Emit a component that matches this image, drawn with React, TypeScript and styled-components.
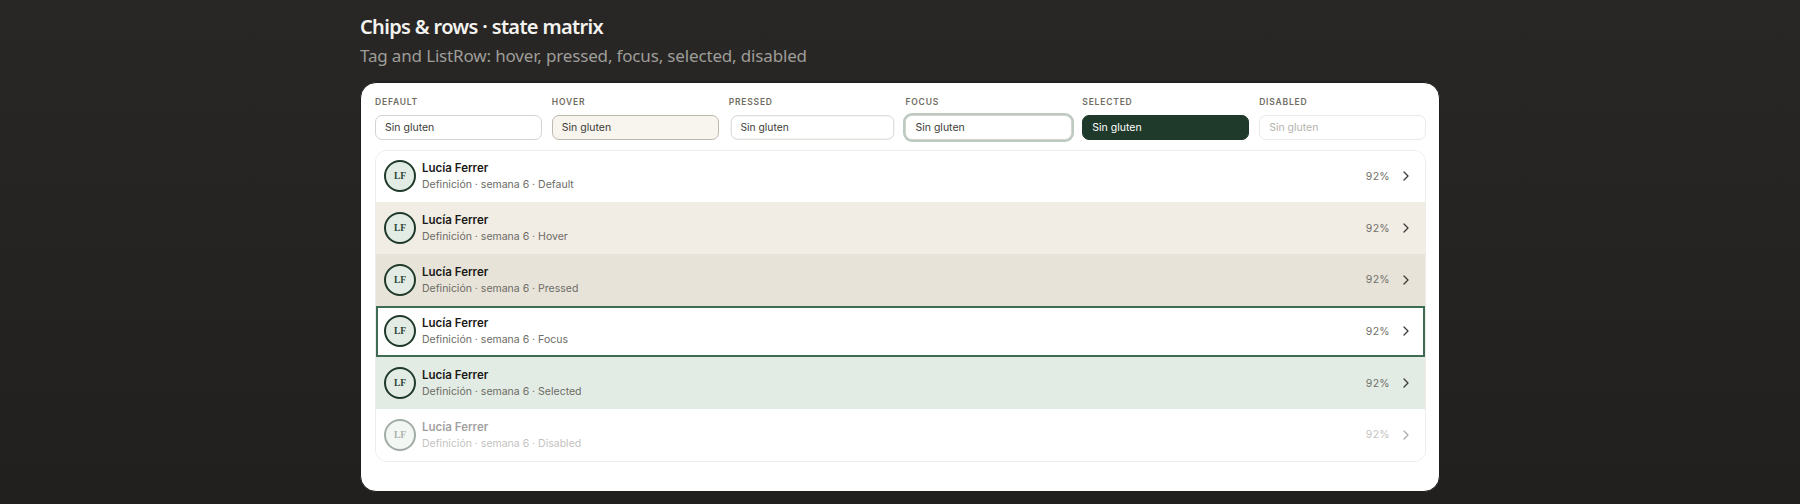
import styled, { createGlobalStyle, css } from 'styled-components'

type ChipState = 'default' | 'hover' | 'pressed' | 'focus' | 'selected' | 'disabled'

const CHIP_STATES: { state: ChipState, label: string }[] = [
  { state: 'default', label: 'Default' },
  { state: 'hover', label: 'Hover' },
  { state: 'pressed', label: 'Pressed' },
  { state: 'focus', label: 'Focus' },
  { state: 'selected', label: 'Selected' },
  { state: 'disabled', label: 'Disabled' }
]

const GlobalStyle = createGlobalStyle`
  html, body {
    background: linear-gradient(180deg, #282726, #21201e);
    height: 100%;
    margin: 0;
  }
`

const Page = styled.main`
  box-sizing: border-box;
  height: 504px;
  margin-left: 360px;
  overflow: hidden;
  padding-top: 13px;
  width: 1080px;
`

const Title = styled.h1`
  color: #f4f3ef;
  font-family: 'Noto Sans', sans-serif;
  font-size: 20px;
  font-weight: 600;
  letter-spacing: -0.65px;
  line-height: 27px;
  margin: 0;
`

const Subtitle = styled.p`
  color: #9e9d98;
  font-family: 'Noto Sans', sans-serif;
  font-size: 17px;
  letter-spacing: -0.16px;
  line-height: 24px;
  margin: 4px 0 0;
`

const Card = styled.section`
  background: #fff;
  border: 1px solid #1d1c1b;
  border-radius: 16px;
  box-sizing: border-box;
  font-family: Inter, sans-serif;
  height: 410px;
  margin-top: 14px;
  padding: 13.5px 13px 13px 14px;
`

const ChipGrid = styled.div`
  display: grid;
  gap: 10px;
  grid-template-columns: repeat(6, 1fr);
`

const ChipCell = styled.div`
  display: flex;
  flex-direction: column;
  gap: 7.5px;
`

const ChipLabel = styled.span`
  color: #6f6d62;
  font-size: 8.5px;
  font-weight: 600;
  letter-spacing: 0.8px;
  line-height: 11px;
  text-transform: uppercase;
`

const chipVariants: Record<ChipState, ReturnType<typeof css>> = {
  default: css`
    background: #fff;
    border-color: #d4d3cd;
    color: #3c3b37;
  `,
  hover: css`
    background: #f8f5ef;
    border-color: #bdb9ae;
    color: #3c3b37;
  `,
  pressed: css`
    background: #fff;
    border-color: #d4d3cd;
    color: #3c3b37;
    transform: scale(0.98);
  `,
  focus: css`
    background: #fff;
    border-color: #d4d3cd;
    box-shadow: 0 0 0 2px #bccac1;
    color: #3c3b37;
  `,
  selected: css`
    background: #1f3a2b;
    border-color: #1f3a2b;
    color: #fff;
  `,
  disabled: css`
    background: #fff;
    border-color: #eceae6;
    color: #b4b3ae;
  `
}

const Chip = styled.span<{ $state: ChipState }>`
  align-items: center;
  border: 1px solid;
  border-radius: 7px;
  box-sizing: border-box;
  display: flex;
  font-size: 10.5px;
  height: 24.5px;
  padding: 0 9px;
  ${({ $state }) => chipVariants[$state]}
`

const List = styled.ul`
  border: 1px solid #eeece8;
  border-radius: 12px;
  box-sizing: border-box;
  list-style: none;
  margin: 10px 0 0;
  overflow: hidden;
  padding: 0;
`

const rowVariants: Record<ChipState, ReturnType<typeof css>> = {
  default: css`background: #fff;`,
  hover: css`background: #f1ece4;`,
  pressed: css`background: #e8e3d8;`,
  focus: css`
    background: #fff;
    box-shadow: inset 0 0 0 2px #3f6a54;
  `,
  selected: css`background: #e3ece4;`,
  disabled: css`
    background: #fff;
    > * { opacity: 0.42; }
  `
}

const Row = styled.li<{ $state: ChipState }>`
  align-items: center;
  box-sizing: border-box;
  display: flex;
  gap: 6px;
  height: 51.7px;
  padding: 0 13px 0 8px;
  ${({ $state }) => rowVariants[$state]}
`

const Avatar = styled.span`
  align-items: center;
  background: #e3ece4;
  border: 2px solid #1f3a2b;
  border-radius: 50%;
  box-sizing: border-box;
  color: #2b4436;
  display: flex;
  flex: none;
  font-family: 'Liberation Serif', serif;
  font-size: 9.5px;
  font-weight: 700;
  height: 32px;
  justify-content: center;
  width: 32px;
`

const RowText = styled.div`
  display: flex;
  flex: 1;
  flex-direction: column;
  gap: 1px;
  padding-top: 1px;
`

const RowName = styled.span`
  color: #191917;
  font-size: 11.5px;
  font-weight: 600;
  line-height: 15px;
`

const RowMeta = styled.span`
  color: #6c6b65;
  font-size: 10.5px;
  line-height: 15px;
`

const RowValue = styled.span`
  color: #6f6e68;
  font-size: 10.5px;
  letter-spacing: 0.3px;
  margin-right: 4px;
`

const Chevron = styled.svg`
  color: #3c3b37;
  flex: none;
  height: 12px;
  width: 12px;
`

function ListRow ({ state, label }: { state: ChipState, label: string }): JSX.Element {
  return (
    <Row $state={state}>
      <Avatar>LF</Avatar>
      <RowText>
        <RowName>Lucía Ferrer</RowName>
        <RowMeta>Definición · semana 6 · {label}</RowMeta>
      </RowText>
      <RowValue>92%</RowValue>
      <Chevron viewBox='0 0 12 12' fill='none' stroke='currentColor' strokeWidth='1.3' strokeLinecap='round' strokeLinejoin='round'>
        <path d='M4 2 8 6 4 10' />
      </Chevron>
    </Row>
  )
}

export default function App (): JSX.Element {
  return (
    <Page>
      <GlobalStyle />
      <Title>Chips &amp; rows · state matrix</Title>
      <Subtitle>Tag and ListRow: hover, pressed, focus, selected, disabled</Subtitle>
      <Card>
        <ChipGrid>
          {CHIP_STATES.map(({ state, label }) => (
            <ChipCell key={state}>
              <ChipLabel>{label}</ChipLabel>
              <Chip $state={state}>Sin gluten</Chip>
            </ChipCell>
          ))}
        </ChipGrid>
        <List>
          {CHIP_STATES.map(({ state, label }) => (
            <ListRow key={state} state={state} label={label} />
          ))}
        </List>
      </Card>
    </Page>
  )
}
